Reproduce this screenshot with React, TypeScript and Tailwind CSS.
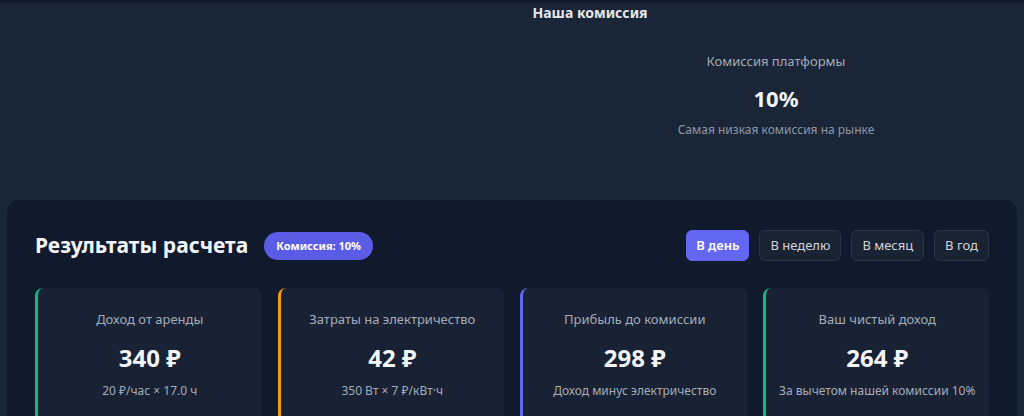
import { useState } from "react";

type Period = "day" | "week" | "month" | "year";

const periods: { id: Period; label: string }[] = [
  { id: "day", label: "В день" },
  { id: "week", label: "В неделю" },
  { id: "month", label: "В месяц" },
  { id: "year", label: "В год" },
];

const stats = [
  { title: "Доход от аренды", value: "340 ₽", note: "20 ₽/час × 17.0 ч", border: "border-l-[#10b981]" },
  { title: "Затраты на электричество", value: "42 ₽", note: "350 Вт × 7 ₽/кВт·ч", border: "border-l-[#f59e0b]" },
  { title: "Прибыль до комиссии", value: "298 ₽", note: "Доход минус электричество", border: "border-l-[#6366f1]" },
  { title: "Ваш чистый доход", value: "264 ₽", note: "За вычетом нашей комиссии 10%", border: "border-l-[#10b981]" },
];

export default function App() {
  const [period, setPeriod] = useState<Period>("day");

  return (
    <div className="min-h-screen bg-[#1b2538] text-white font-['Noto_Sans','Open_Sans',sans-serif] overflow-hidden">
      <div className="h-[3px] bg-[#121a2b]" />

      {/* commission */}
      <section>
        <h3 className="pl-[156px] text-center text-[14px] font-bold leading-5 text-[#e5e7eb]">Наша комиссия</h3>
        <div className="grid grid-cols-[1fr_472px] pr-3 mt-[7px]">
          <div />
          <div className="rounded-lg border border-[#1c2639] bg-[#1b2538] pt-[20px] pb-[26px] text-center">
            <p className="text-[13px] leading-5 text-[#a3acb9]">Комиссия платформы</p>
            <p className="mt-[11px] text-[22px] font-bold leading-8 text-[#f1f5f9]">10%</p>
            <p className="mt-[8px] text-[12px] leading-4 text-[#8d97a6]">Самая низкая комиссия на рынке</p>
          </div>
        </div>
      </section>

      {/* results */}
      <section className="mx-[7px] mt-[35px] rounded-xl bg-[#111a2d] px-7 pt-[30px] pb-8">
        <div className="flex items-center justify-between">
          <div className="flex items-center gap-4">
            <h2 className="text-[21px] font-bold text-[#f1f5f9]">Результаты расчета</h2>
            <span className="rounded-full bg-[#5b5ce6] px-3 py-[6px] text-[11px] font-bold leading-4 text-white">
              Комиссия: 10%
            </span>
          </div>
          <div className="flex gap-[10px]">
            {periods.map((p) => (
              <button
                key={p.id}
                onClick={() => setPeriod(p.id)}
                className={
                  period === p.id
                    ? "h-[31px] rounded-md border border-[#6366f1] bg-[#6366f1] px-[9px] text-[13px] font-semibold text-white"
                    : "h-[31px] rounded-md border border-[#2a3547] bg-[#1a2334] px-[10px] text-[13px] text-[#d1d5db]"
                }
              >
                {p.label}
              </button>
            ))}
          </div>
        </div>

        <div className="mt-[26px] grid grid-cols-4 gap-4">
          {stats.map((s) => (
            <div
              key={s.title}
              className={`rounded-lg border-l-[3px] ${s.border} bg-[#192234] pt-[21px] pb-6 text-center`}
            >
              <p className="text-[13px] leading-5 text-[#a3acb9]">{s.title}</p>
              <p className="mt-[13px] text-[24px] font-bold leading-8 text-[#f1f5f9]">{s.value}</p>
              <p className="mt-[9px] text-[12px] leading-4 text-[#a3acb9]">{s.note}</p>
            </div>
          ))}
        </div>
      </section>
    </div>
  );
}
